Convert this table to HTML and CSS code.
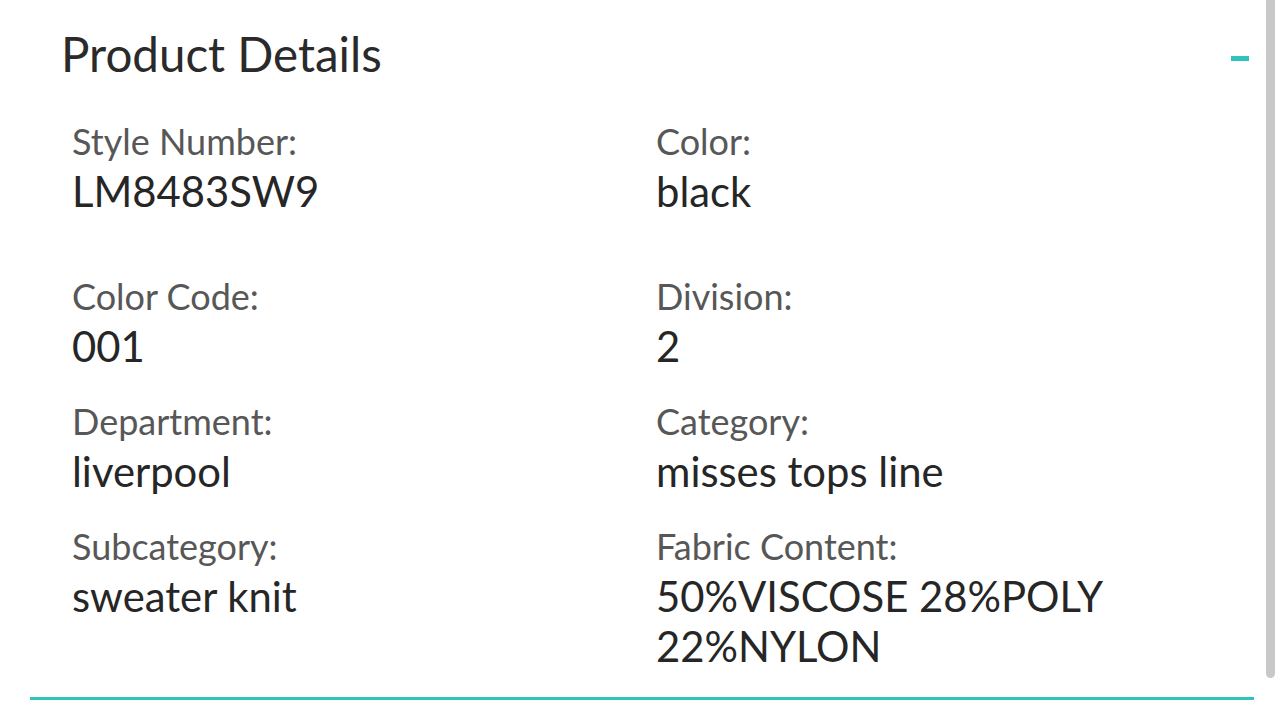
FILE: index.html
```html
<!DOCTYPE html>
<html lang="en">
<head>
<meta charset="utf-8">
<title>Product Details</title>
<link rel="stylesheet" href="styles.css">
</head>
<body>
<section class="panel">
  <header class="panel-head">
    <h2 class="panel-title">Product Details</h2>
    <span class="collapse" aria-label="collapse"></span>
  </header>
  <dl class="details">
    <div class="item first"><dt>Style Number:</dt><dd>LM8483SW9</dd></div>
    <div class="item first"><dt>Color:</dt><dd>black</dd></div>
    <div class="item"><dt>Color Code:</dt><dd>001</dd></div>
    <div class="item"><dt>Division:</dt><dd>2</dd></div>
    <div class="item"><dt>Department:</dt><dd>liverpool</dd></div>
    <div class="item"><dt>Category:</dt><dd>misses tops line</dd></div>
    <div class="item"><dt>Subcategory:</dt><dd>sweater knit</dd></div>
    <div class="item"><dt>Fabric Content:</dt><dd>50%VISCOSE 28%POLY 22%NYLON</dd></div>
  </dl>
</section>
<div class="scroll-thumb"></div>
</body>
</html>
```

FILE: styles.css
```css
html, body {
  margin: 0;
  padding: 0;
  background: #ffffff;
  height: 711px;
  overflow: hidden;
}
body {
  font-family: Lato, "Noto Sans", sans-serif;
  color: #262626;
}
.panel {
  margin: 0 30px 0 30px;
  width: 1224px;
  border-bottom: 3px solid #2ec4b9;
  padding-top: 26px;
  padding-bottom: 26px;
}
.panel-head {
  display: flex;
  justify-content: space-between;
  align-items: flex-start;
  padding-left: 31px;
  padding-right: 5px;
}
.panel-title {
  margin: 0;
  font-weight: 400;
  font-size: 47.5px;
  line-height: 56px;
  color: #2a2a2a;
}
.collapse {
  display: block;
  width: 18px;
  height: 5px;
  margin-top: 30px;
  background: #2ec4bd;
}
.details {
  display: grid;
  grid-template-columns: 584px 584px;
  row-gap: 25px;
  margin: 0;
  padding-left: 42px;
  padding-top: 34px;
}
.item.first {
  padding-bottom: 30px;
}
.details dt {
  font-size: 36px;
  line-height: 50px;
  color: #575757;
}
.details dd {
  margin: 0;
  font-size: 41.8px;
  line-height: 50px;
  color: #262626;
}
.scroll-thumb {
  position: absolute;
  top: 0;
  left: 1266px;
  width: 9px;
  height: 678px;
  background: #c8c8c8;
  border-radius: 0 0 5px 5px;
}
```
